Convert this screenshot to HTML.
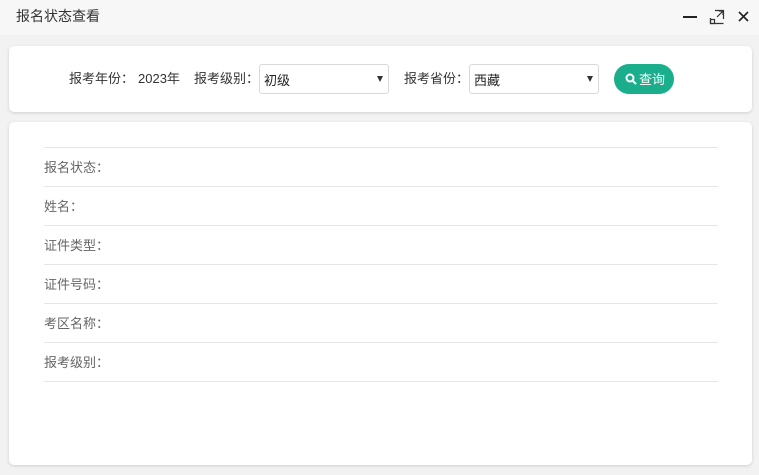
<!DOCTYPE html>
<html><head><meta charset="utf-8"><style>
*{margin:0;padding:0;box-sizing:border-box}
body{width:759px;height:475px;background:#f2f2f2;font-family:"Liberation Sans","Noto Sans CJK SC",sans-serif;position:relative;overflow:hidden;color:#333}
.title{position:absolute;left:0;top:0;width:759px;height:35px;background:#f7f7f7}
.title span{position:absolute;left:16px;top:6px;font-size:14px;color:#333}
.card{position:absolute;left:9px;width:743px;background:#fff;border-radius:5px;box-shadow:0 1px 3px rgba(0,0,0,.15)}
.t{position:absolute;font-size:13px;color:#333;top:68px}
.sel{position:absolute;top:64px;height:30px;border:1px solid #d9d9d9;border-radius:3px;background:#fff;font-size:13px;padding:5px 0 0 4px;color:#222}
.sel i{position:absolute;right:5px;top:11px;width:0;height:0;border-left:3.5px solid transparent;border-right:3.5px solid transparent;border-top:6px solid #333}
.btn{position:absolute;left:614px;top:64px;width:60px;height:30px;border-radius:15px;background:#1aae8c;color:#fff;font-size:13px}
.line{position:absolute;left:44px;width:674px;height:1px;background:#e6e6e6}
.lb{position:absolute;left:44px;font-size:13px;color:#666}
</style></head><body>
<div class="title"><span>报名状态查看</span>
<div style="position:absolute;left:683px;top:16px;width:14px;height:2px;background:#222"></div>
<svg style="position:absolute;left:709px;top:9px" width="16" height="16" viewBox="0 0 16 16" fill="none" stroke="#333" stroke-width="1.2"><path d="M6 1.5H14.5V10M14.5 14.5H1.5V9M8 8L14 2M10 2H14V6"/><rect x="1.5" y="10.5" width="4" height="4"/></svg>
<svg style="position:absolute;left:738px;top:11px" width="11" height="11" viewBox="0 0 11 11" stroke="#222" stroke-width="1.6"><path d="M1 1L10 10M10 1L1 10"/></svg>
</div>
<div class="card" style="top:46px;height:66px"></div>
<div class="t" style="left:69px">报考年份：</div>
<div class="t" style="left:138px">2023年</div>
<div class="t" style="left:194px">报考级别：</div>
<div class="sel" style="left:259px;width:130px">初级<i></i></div>
<div class="t" style="left:404px">报考省份：</div>
<div class="sel" style="left:469px;width:130px">西藏<i></i></div>
<div class="btn"><svg style="position:absolute;left:11px;top:9px" width="12" height="12" viewBox="0 0 12 12" fill="none" stroke="#fff" stroke-width="2"><circle cx="5" cy="5" r="3.5"/><path d="M7.5 7.5L11 11"/></svg><span style="position:absolute;left:25px;top:5px">查询</span></div>
<div class="card" style="top:122px;height:343px"></div>
<div class="line" style="top:147px"></div>
<div class="lb" style="top:157px">报名状态：</div>
<div class="line" style="top:186px"></div>
<div class="lb" style="top:196px">姓名：</div>
<div class="line" style="top:225px"></div>
<div class="lb" style="top:235px">证件类型：</div>
<div class="line" style="top:264px"></div>
<div class="lb" style="top:274px">证件号码：</div>
<div class="line" style="top:303px"></div>
<div class="lb" style="top:313px">考区名称：</div>
<div class="line" style="top:342px"></div>
<div class="lb" style="top:352px">报考级别：</div>
<div class="line" style="top:381px"></div>
</body></html>
